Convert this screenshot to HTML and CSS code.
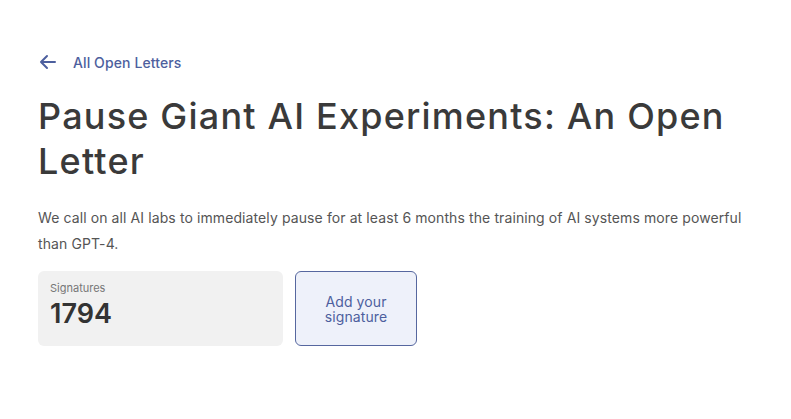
FILE: index.html
```html
<!DOCTYPE html>
<html>
<head>
<meta charset="utf-8">
<link rel="stylesheet" href="styles.css">
</head>
<body>
<main class="page">
  <a class="back" href="#">
    <svg class="back-icon" width="18" height="18" viewBox="0 0 18 18" fill="none" stroke="currentColor" stroke-width="2" stroke-linecap="round" stroke-linejoin="round"><path d="M16 9H2M8 3L2 9l6 6"/></svg>
    <span>All Open Letters</span>
  </a>
  <h1 class="title">Pause Giant AI Experiments: An Open Letter</h1>
  <p class="lead">We call on all AI labs to immediately pause for at least 6 months the training of AI systems more powerful than GPT-4.</p>
  <div class="actions">
    <div class="count">
      <div class="count-label">Signatures</div>
      <div class="count-value">1794</div>
    </div>
    <button class="sign">Add your signature</button>
  </div>
</main>
</body>
</html>
```
FILE: styles.css
```css
html, body { margin: 0; padding: 0; background: #fff; }
body { font-family: Inter, "Noto Sans", sans-serif; color: #333; }
.page { padding: 52px 38px 0 38px; width: 720px; }
.back { display: flex; align-items: center; gap: 16px; color: #4d5f9e; text-decoration: none; font-size: 14px; font-weight: 500; height: 20px; letter-spacing: 0.1px; }
.back-icon { display: block; margin-left: 1px; }
.title { margin: 22px 0 0 0; font-size: 36px; font-weight: 500; line-height: 45px; color: #3a3a3a; letter-spacing: 1.2px; }
.lead { margin: 21px 0 0 0; font-size: 14px; line-height: 26px; color: #555; width: 720px; letter-spacing: 0.1px; }
.actions { display: flex; gap: 12px; margin-top: 14px; }
.count { width: 245px; height: 75px; box-sizing: border-box; background: #f1f1f1; border-radius: 6px; padding: 10px 12px; }
.count-label { font-size: 11px; color: #777; line-height: 14px; }
.count-value { font-size: 27px; font-weight: 600; color: #333; line-height: 32px; margin-top: 3px; }
.sign { width: 122px; height: 75px; box-sizing: border-box; background: #eef1fa; border: 1px solid #56679f; border-radius: 6px; color: #4d5f9e; font-family: inherit; font-size: 14px; line-height: 15px; padding: 0 20px; letter-spacing: 0.1px; }
```
